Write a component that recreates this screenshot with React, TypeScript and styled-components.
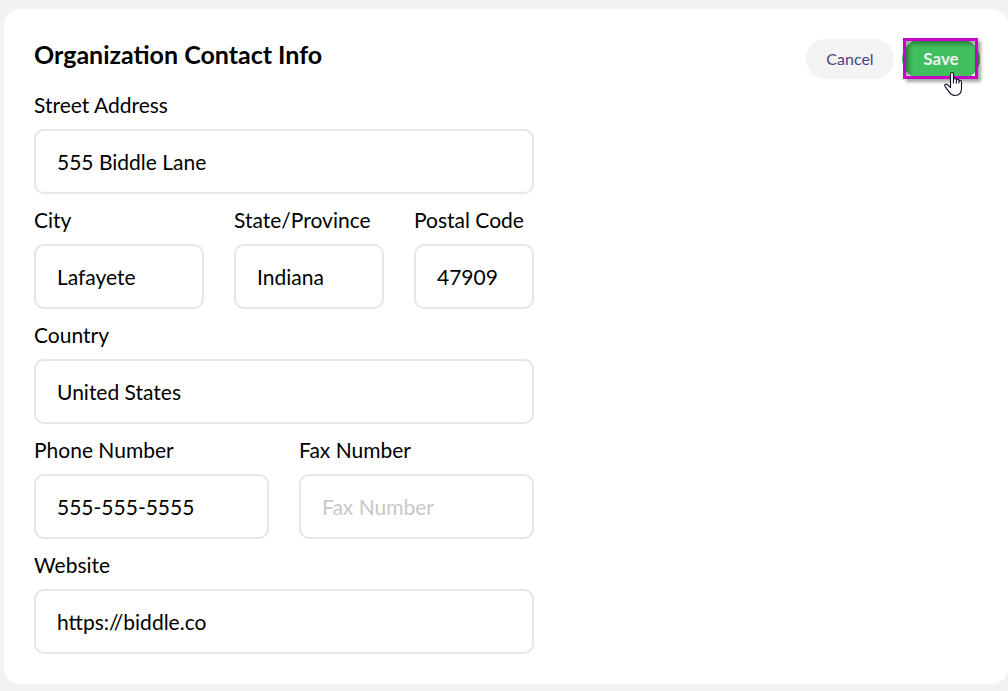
import React, { useId } from "react";
import styled, { createGlobalStyle } from "styled-components";

const GlobalStyle = createGlobalStyle`
  *, *::before, *::after { box-sizing: border-box; }
  body {
    margin: 0;
    background: #f2f2f2;
    color: #000;
    font-family: Lato, "Open Sans", sans-serif;
  }
`;

const Page = styled.main`
  padding: 9px 0 7px 4px;
`;

const Card = styled.form`
  display: flex;
  justify-content: space-between;
  align-items: flex-start;
  gap: 30px;
  padding: 30px 28px 30px 30px;
  background: #fff;
  border-radius: 16px;
`;

const Details = styled.div`
  flex: 0 1 500px;
  min-width: 0;
`;

const Title = styled.h1`
  margin: 0;
  padding-bottom: 10px;
  font-size: 25px;
  line-height: 30px;
  font-weight: 700;
`;

const Row = styled.div`
  display: flex;
  gap: 30px;
`;

const FieldBox = styled.div<{ $basis: number }>`
  flex: 0 1 ${(p) => p.$basis}px;
  min-width: 0;
`;

const Label = styled.label`
  display: block;
  padding: 12px 0 10px;
  font-size: 21px;
  font-weight: 400;
  line-height: 28px;
  white-space: nowrap;
`;

const Input = styled.input`
  display: block;
  width: 100%;
  height: 65px;
  padding: 0 21px;
  border: 2px solid #e5e5ea;
  border-radius: 10px;
  background: #fff;
  color: #000;
  font: inherit;
  font-size: 21px;
  outline: none;

  &::placeholder {
    color: #c8c8c8;
    opacity: 1;
  }
`;

const Actions = styled.div`
  display: flex;
  gap: 8px;
`;

const Button = styled.button<{ $primary?: boolean }>`
  height: 40px;
  min-width: ${(p) => (p.$primary ? 78 : 88)}px;
  padding: 0 20px;
  border: 0;
  border-radius: 20px;
  background: ${(p) => (p.$primary ? "#40bf5f" : "#f3f3f3")};
  color: ${(p) => (p.$primary ? "#f1f3f2" : "#4b4286")};
  font-family: inherit;
  font-size: ${(p) => (p.$primary ? 17 : 16)}px;
  font-weight: ${(p) => (p.$primary ? 700 : 400)};
  line-height: 20px;
`;

const SaveArea = styled.div`
  position: relative;
`;

const Highlight = styled.span`
  position: absolute;
  inset: -1px 2px 0 1px;
  border: 3px solid #c800c8;
  box-shadow: 3px 3px 3px rgba(0, 0, 0, 0.35),
    inset 3px 3px 4px rgba(0, 0, 0, 0.35);
  pointer-events: none;
`;

const Pointer = styled.svg`
  position: absolute;
  left: 41px;
  top: 32px;
  pointer-events: none;
`;

interface FieldProps {
  label: string;
  value?: string;
  placeholder?: string;
  basis?: number;
  type?: string;
}

function Field({ label, value, placeholder, basis = 500, type = "text" }: FieldProps) {
  const id = useId();
  return (
    <FieldBox $basis={basis}>
      <Label htmlFor={id}>{label}</Label>
      <Input id={id} type={type} defaultValue={value} placeholder={placeholder} spellCheck={false} />
    </FieldBox>
  );
}

function HandPointer() {
  return (
    <Pointer width="20" height="26" viewBox="0 0 20 26" aria-hidden="true">
      <path
        d="M7.5 14.5V3.2C7.5.9 10.5.9 10.5 3.2V8.2C11.3 7 13.2 7.2 13.4 8.8C14.3 7.8 15.9 8.1 16 9.7C17 9 18.5 9.5 18.5 11V17C18.5 21.6 16 24.5 12 24.5C8.6 24.5 6.7 22.2 5.1 19.6L2.2 15.7C.7 13.8 2.8 12.3 4.5 13.7L7.5 16.5Z"
        fill="#fff"
        stroke="#111127"
        strokeWidth="1.1"
        strokeLinejoin="round"
      />
      <path d="M10.5 8V12.5M13.4 8.8V12.5M16 9.7V12.5" fill="none" stroke="#111127" strokeWidth="1.1" />
    </Pointer>
  );
}

export default function App() {
  return (
    <>
      <GlobalStyle />
      <Page>
        <Card onSubmit={(e: React.FormEvent) => e.preventDefault()}>
          <Details>
            <Title>Organization Contact Info</Title>
            <Row>
              <Field label="Street Address" value="555 Biddle Lane" />
            </Row>
            <Row>
              <Field label="City" value="Lafayete" basis={170} />
              <Field label="State/Province" value="Indiana" basis={150} />
              <Field label="Postal Code" value="47909" basis={120} />
            </Row>
            <Row>
              <Field label="Country" value="United States" />
            </Row>
            <Row>
              <Field label="Phone Number" value="555-555-5555" basis={235} type="tel" />
              <Field label="Fax Number" placeholder="Fax Number" basis={235} type="tel" />
            </Row>
            <Row>
              <Field label="Website" value="https://biddle.co" type="url" />
            </Row>
          </Details>
          <Actions>
            <Button type="button">Cancel</Button>
            <SaveArea>
              <Button type="submit" $primary>
                Save
              </Button>
              <Highlight />
              <HandPointer />
            </SaveArea>
          </Actions>
        </Card>
      </Page>
    </>
  );
}
